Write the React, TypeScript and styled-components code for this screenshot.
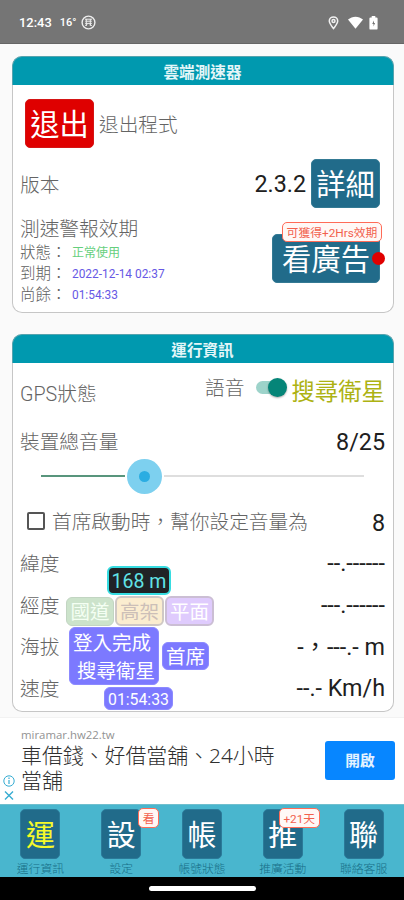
import React from 'react';
import styled, { createGlobalStyle, css } from 'styled-components';

const GlobalStyle = createGlobalStyle`
  * { box-sizing: border-box; }
  body {
    margin: 0;
    background: #fafafa;
    font-family: Roboto, "Noto Sans CJK TC", sans-serif;
  }
`;

const Screen = styled.div`
  width: 404px;
  height: 900px;
  display: flex;
  flex-direction: column;
  overflow: hidden;
  background: #fafafa;
`;

const StatusBar = styled.header`
  height: 44px;
  flex: none;
  display: flex;
  align-items: center;
  padding: 2px 26px 0 19px;
  background: #757575;
  border-bottom: 1px solid #666;
  color: #fff;
`;

const StatusText = styled.span<{ $gap: number; $size: number }>`
  font: 500 ${p => p.$size}px/20px Roboto, sans-serif;
  margin-right: ${p => p.$gap}px;
`;

const StatusIcons = styled.div`
  display: flex;
  align-items: center;
  margin-left: auto;
`;

const Content = styled.main`
  height: 673px;
  flex: none;
  display: flex;
  flex-direction: column;
  gap: 21px;
  padding: 12px 10px 0 12px;
`;

const Card = styled.section<{ $height: number }>`
  position: relative;
  flex: none;
  height: ${p => p.$height}px;
  background: #fff;
  border: 1px solid #c6c6c6;
  border-top: 0;
  border-radius: 10px;
`;

const CardTitle = styled.h2`
  margin: 0 -1px;
  height: 29px;
  display: flex;
  align-items: center;
  justify-content: center;
  padding-top: 3px;
  padding-right: 1px;
  background: #0099af;
  border: 1px solid #55a3ae;
  border-bottom: 0;
  border-radius: 10px 10px 0 0;
  color: #e4f6f8;
  font-size: 15.6px;
  font-weight: 700;
  line-height: 20px;
`;

const Row = styled.div<{ $height: number; $top?: number }>`
  height: ${p => p.$height}px;
  margin-top: ${p => p.$top ?? 0}px;
  display: flex;
  align-items: center;
  padding: 0 8px 0 7px;
`;

const Label = styled.span<{ $lift?: number }>`
  font-size: 19.7px;
  font-weight: 300;
  line-height: 24px;
  color: #646464;
  white-space: nowrap;
  padding-top: 4px;
  padding-bottom: ${p => p.$lift ?? 0}px;
`;

const Value = styled.span<{ $gap?: number }>`
  margin-left: auto;
  margin-right: ${p => p.$gap ?? 0}px;
  padding-top: 1px;
  font-size: 23.3px;
  line-height: 28px;
  color: #202020;
  white-space: pre;
`;

const Button = styled.button<{ $danger?: boolean; $width: number }>`
  position: relative;
  flex: none;
  width: ${p => p.$width}px;
  height: 49px;
  margin: 0;
  padding: 3px 0 0;
  border: 1px solid ${p => (p.$danger ? '#d51515' : '#347a94')};
  border-radius: 5px;
  background: ${p => (p.$danger ? '#df0000' : '#216b8a')};
  color: #fff;
  font: 400 29.3px/40px Roboto, "Noto Sans CJK TC", sans-serif;
`;

const ExitSlot = styled.div`
  display: flex;
  align-items: center;
  gap: 5px;
  padding-left: 5px;
`;

const ValidityRow = styled.div`
  display: flex;
  justify-content: space-between;
  margin-top: 6px;
  padding: 0 13px 0 7px;
`;

const ValidityList = styled.div`
  display: flex;
  flex-direction: column;
`;

const Detail = styled.div`
  height: 21.3px;
  display: flex;
  align-items: center;
  font-size: 15.5px;
  font-weight: 300;
  line-height: 20px;
  color: #5e5e5e;
`;

const DetailName = styled.span`
  width: 52px;
`;

const DetailValue = styled.span<{ $ok?: boolean }>`
  font-size: ${p => (p.$ok ? 12 : 11.9)}px;
  font-weight: 400;
  color: ${p => (p.$ok ? '#65cf7d' : '#6758e5')};
`;

const AdButtonSlot = styled.div`
  position: relative;
  margin-top: 20px;
  height: 49px;
`;

const Tag = styled.span<{ $top: number; $left: number; $width: number; $height: number }>`
  position: absolute;
  top: ${p => p.$top}px;
  left: ${p => p.$left}px;
  width: ${p => p.$width}px;
  height: ${p => p.$height}px;
  display: flex;
  align-items: center;
  justify-content: center;
  padding-top: 2px;
  border: 1px solid #ff6b57;
  border-radius: 5px;
  background: #fff8f6;
  color: #f2604d;
  font-size: 11.8px;
  line-height: 16px;
  white-space: nowrap;
`;

const Dot = styled.i`
  position: absolute;
  top: 18px;
  right: -5px;
  width: 13px;
  height: 13px;
  border-radius: 50%;
  background: #e00000;
`;

const VoiceGroup = styled.div`
  display: flex;
  align-items: center;
  margin-left: auto;
`;

const SwitchTrack = styled.div`
  width: 27px;
  height: 13px;
  margin: 0 8px 11px 12px;
  display: flex;
  align-items: center;
  justify-content: flex-end;
  border-radius: 7px;
  background: #9dd3ca;
`;

const SwitchThumb = styled.div`
  flex: none;
  width: 19px;
  height: 19px;
  margin-right: -4px;
  border-radius: 50%;
  background: #058578;
  box-shadow: 0 1px 2px #0005;
`;

const GpsState = styled.span`
  font-size: 23.4px;
  line-height: 30px;
  color: #adb213;
  padding-bottom: 3px;
`;

const Slider = styled.div`
  height: 36px;
  margin: -3px 29px 0 28px;
  display: flex;
  align-items: center;
`;

const SliderLine = styled.div<{ $on?: boolean }>`
  height: 2px;
  background: ${p => (p.$on ? '#58957c' : '#dedede')};
  ${p => (p.$on ? css`width: 84px;` : css`flex: 1;`)}
`;

const SliderThumb = styled.div`
  width: 35px;
  height: 35px;
  margin: 0 2px;
  display: flex;
  align-items: center;
  justify-content: center;
  border-radius: 50%;
  background: #7dd0ef;
  &::after {
    content: "";
    width: 11px;
    height: 11px;
    border-radius: 50%;
    background: #2bade2;
  }
`;

const Checkbox = styled.span`
  width: 18px;
  height: 18px;
  margin: 0 7px 2px 7px;
  border: 2px solid #555;
  border-radius: 2px;
`;

const Overlay = styled.aside`
  position: absolute;
  left: 52px;
  top: 232px;
  width: 150px;
  display: flex;
  flex-direction: column;
`;

type ChipTone = 'green' | 'amber' | 'violet' | 'blue' | 'dark';
const tones: Record<ChipTone, ReturnType<typeof css>> = {
  green: css`background: #cce3cb; border-color: #c2d5c2; color: #f4fff3;`,
  amber: css`background: #fbedd0; border-color: #cfc8c5; color: #ccbfb8;`,
  violet: css`background: #dfcbfd; border-color: #cbbed4; color: #fff;`,
  blue: css`background: #7c79ff; border-color: #8c8aff; color: #fff;`,
  dark: css`background: #202326; border-color: #37dce1; color: #61e3e6;`,
};

const Chip = styled.div<{ $tone: ChipTone; $width: number; $height: number; $size?: number }>`
  flex: none;
  width: ${p => p.$width}px;
  height: ${p => p.$height}px;
  display: flex;
  align-items: center;
  justify-content: center;
  padding-top: 3px;
  border: ${p => (p.$tone === 'dark' || p.$tone === 'amber' || p.$tone === 'violet' ? 2 : 1)}px solid;
  border-radius: 6px;
  font-size: ${p => p.$size ?? 19.5}px;
  line-height: 28px;
  white-space: pre;
  ${p => tones[p.$tone]}
`;

const ChipRow = styled.div<{ $left: number; $top: number; $gap?: number }>`
  display: flex;
  align-items: center;
  gap: ${p => p.$gap ?? 0}px;
  margin: ${p => p.$top}px 0 0 ${p => p.$left}px;
`;

const StateChip = styled(Chip)`
  flex-direction: column;
  align-items: stretch;
  padding: 3px 3px 0;
  > span:last-child { text-align: right; }
`;

const AdBanner = styled.section`
  height: 87px;
  flex: none;
  display: flex;
  background: #fff;
  border-top: 1px solid #f2f2f2;
`;

const AdMarks = styled.div`
  width: 21px;
  padding: 57px 0 0 3px;
  display: flex;
  flex-direction: column;
  gap: 3px;
`;

const AdCopy = styled.div`
  flex: 1;
  padding-top: 8px;
`;

const AdHost = styled.div`
  font: 400 11.4px/17px "Open Sans", "Noto Sans", sans-serif;
  color: #929292;
`;

const AdHeadline = styled.div`
  width: 262px;
  font: 300 20.9px/25px "Noto Sans", "Noto Sans CJK TC", sans-serif;
  color: #303030;
`;

const AdAction = styled.button`
  width: 70px;
  height: 39px;
  margin: 23px 9px 0 0;
  padding: 0 0 2px;
  border: 0;
  border-radius: 3px;
  background: #0786ff;
  color: #e3f2ff;
  font: 700 14.7px/20px "Noto Sans CJK TC", sans-serif;
`;

const NavBar = styled.nav`
  height: 73px;
  flex: none;
  display: grid;
  grid-template-columns: repeat(5, 1fr);
  border-top: 1px solid #70bfce;
  background: #49b6ce;
`;

const NavItem = styled.div`
  display: flex;
  flex-direction: column;
  align-items: center;
  padding-top: 4px;
`;

const NavTile = styled.div<{ $active?: boolean }>`
  position: relative;
  width: 40px;
  height: 50px;
  display: flex;
  align-items: center;
  justify-content: center;
  padding-top: 3px;
  border: 1px solid #2b7a99;
  border-radius: 5px;
  background: #216b8a;
  color: ${p => (p.$active ? '#f5f929' : '#fff')};
  font-size: 29px;
  line-height: 40px;
`;

const NavLabel = styled.span`
  font-size: 11.8px;
  font-weight: 300;
  line-height: 17px;
  margin-top: 2px;
  color: #176e87;
`;

const GestureBar = styled.footer`
  flex: 1;
  display: flex;
  justify-content: center;
  padding-top: 9px;
  background: #000;
  &::after {
    content: "";
    width: 107px;
    height: 5px;
    border-radius: 3px;
    background: #fff;
  }
`;

const NAV = [
  { glyph: '運', label: '運行資訊', active: true },
  { glyph: '設', label: '設定', tag: '看', left: 36, width: 21 },
  { glyph: '帳', label: '帳號狀態' },
  { glyph: '推', label: '推廣活動', tag: '+21天', left: 15, width: 41 },
  { glyph: '聯', label: '聯絡客服' },
];

const READINGS = [
  ['緯度', '--.------'],
  ['經度', '---.------'],
  ['海拔', '-，---.- m'],
  ['速度', '--.- Km/h'],
];

const AppNoticeIcon = () => (
  <svg width="15" height="15" viewBox="0 0 15 15" fill="none" stroke="#eee">
    <circle cx="7.5" cy="7.5" r="6.4" strokeWidth="1.4" />
    <path d="M4 4.2h7M4.3 6.2h6.5M4.2 8.4h6.6M5.3 4v7M9.3 4v7M4.3 11l2-2M10.8 11l-2-2" strokeWidth="1" />
  </svg>
);

const PinIcon = () => (
  <svg width="11" height="14" viewBox="0 0 11 14" fill="none" stroke="#f1f1f1" strokeWidth="1.5">
    <path d="M5.5 12.6C3.4 9.8 1.3 7.6 1.3 5.1a4.2 4.2 0 0 1 8.4 0c0 2.5-2.1 4.7-4.2 7.5Z" />
    <circle cx="5.5" cy="5" r="1.5" />
  </svg>
);

const WifiIcon = () => (
  <svg width="15" height="13" viewBox="0 0 15 13" fill="#fff">
    <path d="M0 3.6C4.3-.3 10.7-.3 15 3.6L7.5 12.7Z" />
  </svg>
);

const BatteryIcon = () => (
  <svg width="9" height="14" viewBox="0 0 9 14">
    <path d="M2.7 0h3.6v1.5h1.2q1.1 0 1.1 1.1v9.8q0 1.2-1.2 1.2H1.6Q.4 13.6.4 12.4V2.6q0-1.1 1.1-1.1h1.2Z" fill="#fff" />
    <path d="M5 4.5 3.2 8h1.3v2.5l1.6-3.4H5Z" fill="#757575" />
  </svg>
);

export default function App() {
  return (
    <Screen>
      <GlobalStyle />
      <StatusBar>
        <StatusText $gap={8} $size={12.9}>12:43</StatusText>
        <StatusText $gap={5} $size={11}>16°</StatusText>
        <AppNoticeIcon />
        <StatusIcons>
          <PinIcon />
          <svg width="9" height="1" />
          <WifiIcon />
          <svg width="6" height="1" />
          <BatteryIcon />
        </StatusIcons>
      </StatusBar>

      <Content>
        <Card $height={257}>
          <CardTitle>雲端測速器</CardTitle>
          <Row $height={49} $top={14}>
            <ExitSlot>
              <Button $danger $width={69}>退出</Button>
              <Label>退出程式</Label>
            </ExitSlot>
          </Row>
          <Row $height={49} $top={11}>
            <Label>版本</Label>
            <Value $gap={5}>2.3.2</Value>
            <Button $width={69}>詳細</Button>
            <svg width="5" height="1" />
          </Row>
          <ValidityRow>
            <ValidityList>
              <Label>測速警報效期</Label>
              <Detail><DetailName>狀態：</DetailName><DetailValue $ok>正常使用</DetailValue></Detail>
              <Detail><DetailName>到期：</DetailName><DetailValue>2022-12-14 02:37</DetailValue></Detail>
              <Detail><DetailName>尚餘：</DetailName><DetailValue>01:54:33</DetailValue></Detail>
            </ValidityList>
            <AdButtonSlot>
              <Button $width={108}>看廣告</Button>
              <Tag $top={-12} $left={10} $width={100} $height={20}>可獲得+2Hrs效期</Tag>
              <Dot />
            </AdButtonSlot>
          </ValidityRow>
        </Card>

        <Card $height={378}>
          <CardTitle>運行資訊</CardTitle>
          <Row $height={56} $top={2}>
            <Label>GPS狀態</Label>
            <VoiceGroup>
              <Label $lift={12}>語音</Label>
              <SwitchTrack><SwitchThumb /></SwitchTrack>
              <GpsState>搜尋衛星</GpsState>
            </VoiceGroup>
          </Row>
          <Row $height={40}>
            <Label>裝置總音量</Label>
            <Value>8/25</Value>
          </Row>
          <Slider>
            <SliderLine $on />
            <SliderThumb />
            <SliderLine />
          </Slider>
          <Row $height={40} $top={8}>
            <Checkbox />
            <Label $lift={2}>首席啟動時，幫你設定音量為</Label>
            <Value>8</Value>
          </Row>
          {READINGS.map(([name, value]) => (
            <Row key={name} $height={41.7}>
              <Label>{name}</Label>
              <Value>{value}</Value>
            </Row>
          ))}
          <Overlay>
            <ChipRow $left={42} $top={0}>
              <Chip $tone="dark" $width={64} $height={29}>168 m</Chip>
            </ChipRow>
            <ChipRow $left={1} $top={1} $gap={1}>
              <Chip $tone="green" $width={48} $height={29}>國道</Chip>
              <Chip $tone="amber" $width={49} $height={30}>高架</Chip>
              <Chip $tone="violet" $width={49} $height={30}>平面</Chip>
            </ChipRow>
            <ChipRow $left={4} $top={1} $gap={3}>
              <StateChip $tone="blue" $width={90} $height={58}>
                <span>登入完成</span>
                <span>搜尋衛星</span>
              </StateChip>
              <Chip $tone="blue" $width={47} $height={28}>首席</Chip>
            </ChipRow>
            <ChipRow $left={39} $top={2}>
              <Chip $tone="blue" $width={69} $height={23} $size={15.8}>01:54:33</Chip>
            </ChipRow>
          </Overlay>
        </Card>
      </Content>

      <AdBanner>
        <AdMarks>
          <svg width="12" height="12" viewBox="0 0 12 12" fill="none" stroke="#36acd2">
            <circle cx="6" cy="6" r="5.2" />
            <path d="M6 5v4M6 2.6v1.3" strokeWidth="1.2" />
          </svg>
          <svg width="12" height="11" viewBox="0 0 12 11" stroke="#36acd2" strokeWidth="1.4">
            <path d="m2 1.5 8 8M10 1.5l-8 8" />
          </svg>
        </AdMarks>
        <AdCopy>
          <AdHost>miramar.hw22.tw</AdHost>
          <AdHeadline>車借錢、好借當舖、24小時當舖</AdHeadline>
        </AdCopy>
        <AdAction>開啟</AdAction>
      </AdBanner>

      <NavBar>
        {NAV.map(item => (
          <NavItem key={item.glyph}>
            <NavTile $active={item.active}>
              {item.glyph}
              {item.tag && (
                <Tag $top={-2} $left={item.left} $width={item.width} $height={20}>{item.tag}</Tag>
              )}
            </NavTile>
            <NavLabel>{item.label}</NavLabel>
          </NavItem>
        ))}
      </NavBar>
      <GestureBar />
    </Screen>
  );
}
